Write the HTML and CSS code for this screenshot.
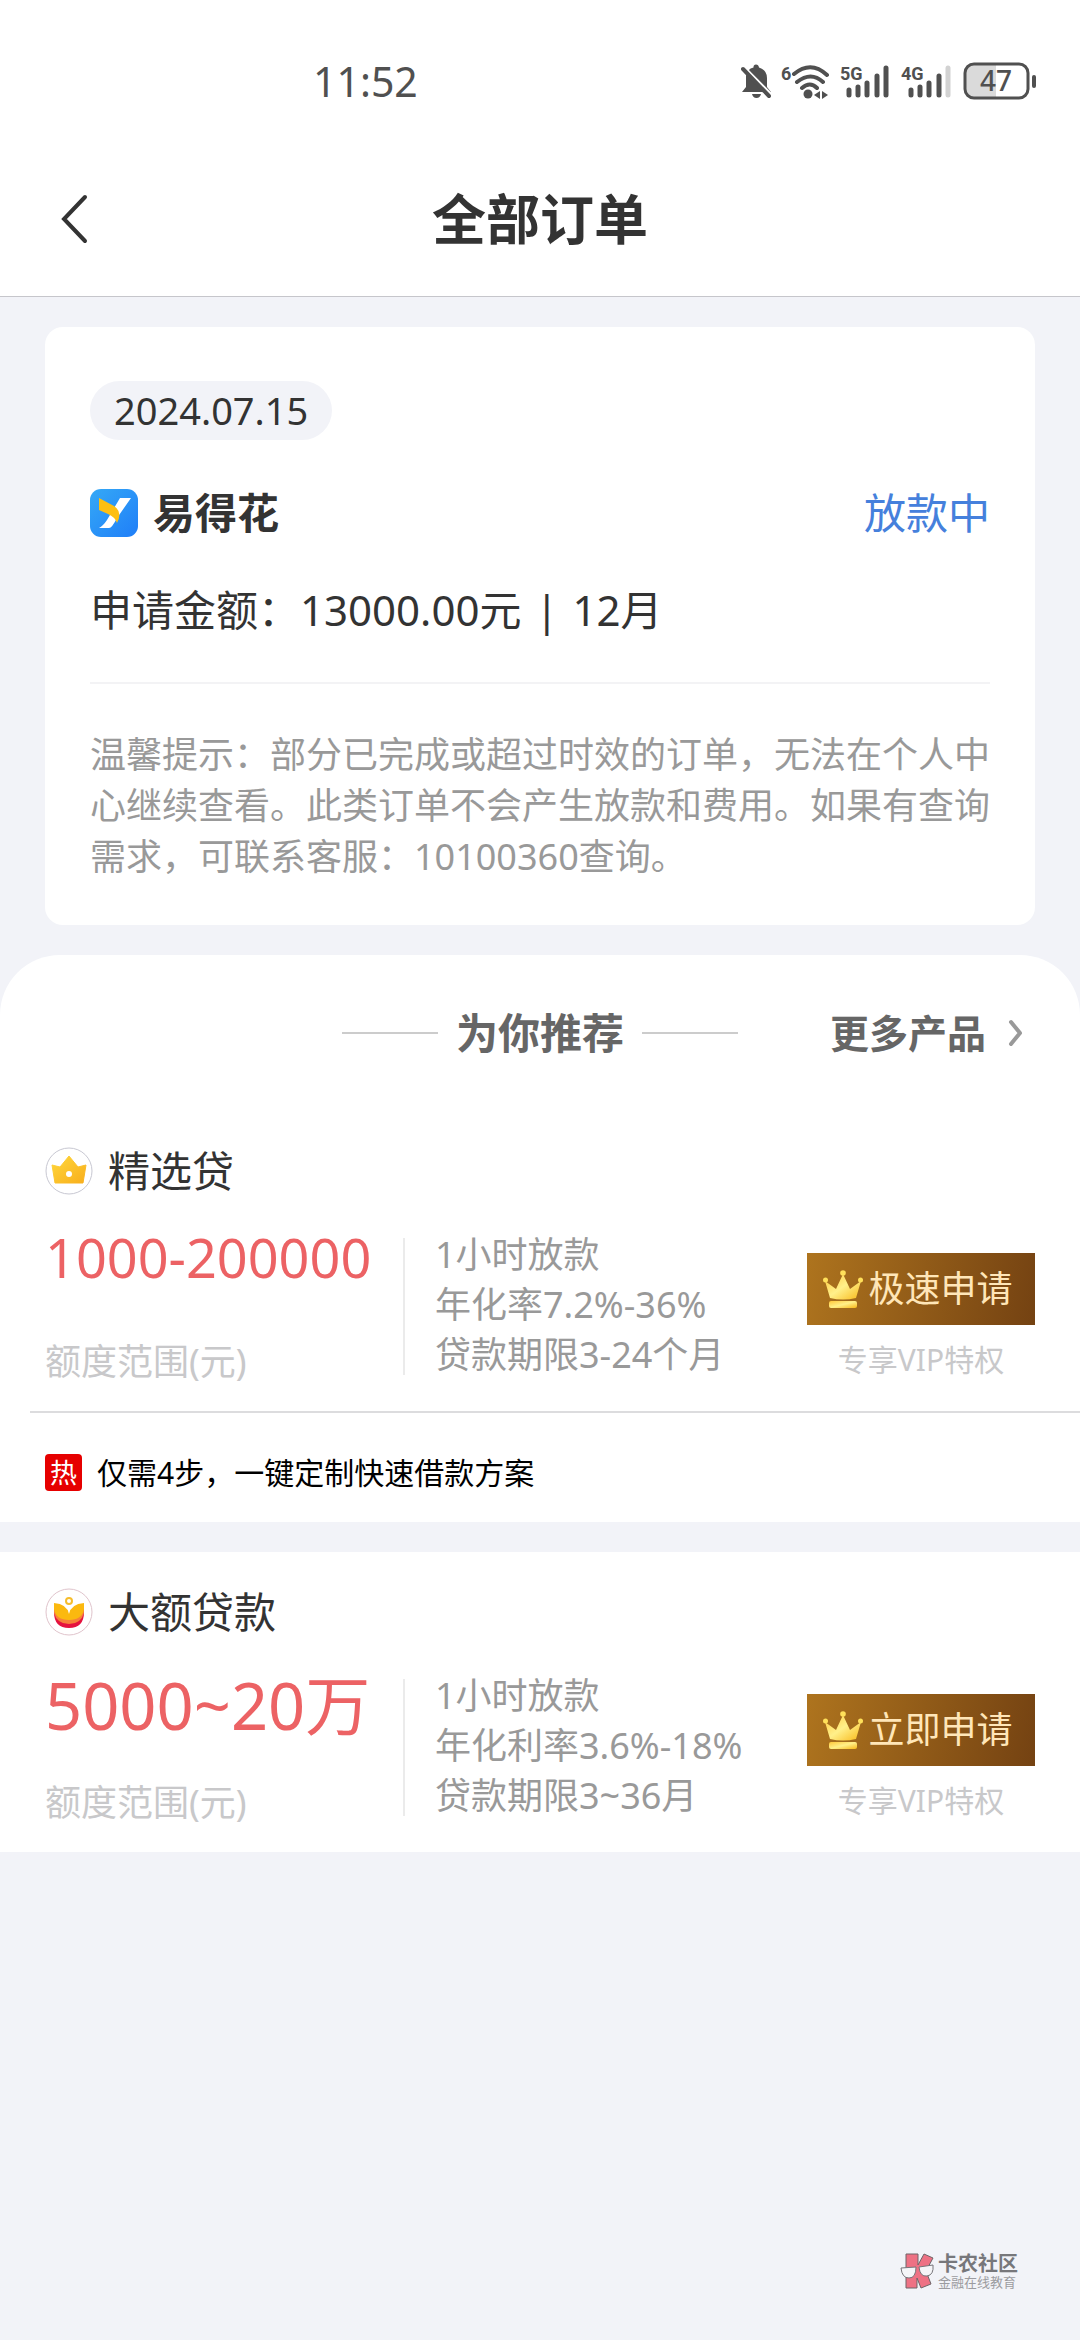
FILE: index.html
```html
<!DOCTYPE html>
<html lang="zh-CN">
<head>
<meta charset="utf-8">
<meta name="viewport" content="width=device-width, initial-scale=1">
<title>全部订单</title>
<link rel="stylesheet" href="styles.css">
</head>
<body>
<svg class="defs" aria-hidden="true">
  <defs>
    <linearGradient id="gold" x1="0" y1="0" x2="1" y2="1">
      <stop offset="0" stop-color="#ffc83a"/><stop offset="0.5" stop-color="#fff08a"/><stop offset="1" stop-color="#f8b818"/>
    </linearGradient>
    <linearGradient id="sun" x1="0" y1="0" x2="1" y2="1">
      <stop offset="0" stop-color="#ffd83c"/><stop offset="1" stop-color="#f8ae1c"/>
    </linearGradient>
    <linearGradient id="sky" x1="0" y1="0" x2="1" y2="1">
      <stop offset="0" stop-color="#35a9f6"/><stop offset="1" stop-color="#1f7ef8"/>
    </linearGradient>
    <symbol id="crown" viewBox="0 0 40 38">
      <path d="M7 28 2 11 13 19 20 4 27 19 38 11 33 28Q20 31 7 28Z" fill="url(#gold)"/>
      <circle cx="2.500" cy="10" r="2.500" fill="#ffe05a"/><circle cx="20" cy="3" r="2.800" fill="#ffe05a"/><circle cx="37.500" cy="10" r="2.500" fill="#ffe05a"/>
      <rect x="6" y="31" width="28" height="7" rx="2" fill="url(#gold)"/>
    </symbol>
  </defs>
</svg>
<div class="page">
  <header class="top">
    <div class="status">
      <time class="clock">11:52</time>
      <div class="status-icons">
        <svg width="30" height="36" viewBox="0 0 30 36">
          <path d="M5 13Q6 6 12.500 4.500V4Q12.500 1.500 15 1.500T18 4.500Q26 7 26 15V24L30 29H1L5 24Z" fill="#505050"/>
          <path d="M11 31H20Q19 35 15.500 35T11 31Z" fill="#505050"/>
          <path d="M1 3 31 33" stroke="#fff" stroke-width="4"/>
          <path d="M2 6 28 33" stroke="#505050" stroke-width="4" stroke-linecap="round"/>
        </svg>
        <svg width="49" height="36" viewBox="0 0 49 36" fill="none" stroke="#505050" stroke-width="4" stroke-linecap="round">
          <text class="net" x="0" y="17" fill="#505050" stroke="none">6</text>
          <path d="M13 11Q30 -3 46 12M16 19Q30 8 42 19M21 25Q29 18 36 25"/>
          <circle cx="27" cy="31" r="4.500" fill="#505050" stroke="none"/>
          <path d="M39 28V36L33 32ZM41 28V36L47 32Z" fill="#505050" stroke="none"/>
        </svg>
        <svg width="51" height="36" viewBox="0 0 51 36" fill="none" stroke="#505050" stroke-width="5" stroke-linecap="round">
          <text class="net" x="0" y="17" fill="#505050" stroke="none">5G</text>
          <path d="M9 27V32M18 24V32M27 20V32M37 13V32M46 5V32"/>
        </svg>
        <svg width="52" height="36" viewBox="0 0 52 36" fill="none" stroke="#505050" stroke-width="5" stroke-linecap="round">
          <text class="net" x="0" y="17" fill="#505050" stroke="none">4G</text>
          <path d="M10 27V32M19 24V32M28 20V32M38 13V32"/><path d="M47 5V32" stroke="#d2d2d2"/>
        </svg>
        <svg width="73" height="40" viewBox="0 0 73 40">
          <path d="M12 4H33V36H12Q3 36 3 28V12Q3 4 12 4Z" fill="#dadada"/>
          <rect x="2" y="3" width="63" height="34" rx="9" fill="none" stroke="#505050" stroke-width="3"/>
          <path d="M71 16V25" stroke="#505050" stroke-width="4" stroke-linecap="round"/>
          <text class="charge" x="33" y="30" text-anchor="middle" fill="#505050">47</text>
        </svg>
      </div>
    </div>
    <nav class="nav">
      <button class="back" type="button" aria-label="返回">
        <svg width="30" height="52" viewBox="0 0 30 52" fill="none" stroke="#333" stroke-width="4" stroke-linecap="round"><path d="M25 4 4 26 25 48"/></svg>
      </button>
      <h1 class="title">全部订单</h1>
    </nav>
  </header>

  <main>
    <section class="order">
      <time class="date">2024.07.15</time>
      <div class="order-head">
        <svg width="48" height="48" viewBox="0 0 48 48">
          <rect width="48" height="48" rx="11" fill="url(#sky)"/>
          <path d="M30 9H41L27 29Q22 39 19 39H9Q13 37 17 31Z" fill="#fff"/>
          <path d="M9 9 24 17Q33 23 27 34Q25 28 18 25L9 21Z" fill="#fdbf12"/>
        </svg>
        <h2 class="order-name">易得花</h2>
        <span class="order-state">放款中</span>
      </div>
      <p class="order-sum">申请金额：13000.00元 <span class="bar">|</span> 12月</p>
      <p class="tip">温馨提示：部分已完成或超过时效的订单，无法在个人中心继续查看。此类订单不会产生放款和费用。如果有查询需求，可联系客服：10100360查询。</p>
    </section>

    <section class="products">
      <div class="products-head">
        <h2 class="products-title">为你推荐</h2>
        <a class="more" href="#more">更多产品
          <svg width="16" height="28" viewBox="0 0 16 28" fill="none" stroke="#999" stroke-width="4" stroke-linecap="round" stroke-linejoin="round"><path d="M3 3 12 14 3 25"/></svg>
        </a>
      </div>

      <article class="product">
        <div class="product-head">
          <svg width="48" height="48" viewBox="0 0 48 48">
            <circle cx="24" cy="24" r="23" fill="#fff" stroke="#c8c8d2"/>
            <path d="M7 18 15 20 24 9 33 20 41 18 38 36H10Z" fill="url(#sun)" stroke="url(#sun)" stroke-linejoin="round"/>
            <circle cx="24" cy="27" r="3" fill="#fff"/>
          </svg>
          <h3 class="product-name">精选贷</h3>
        </div>
        <div class="product-body">
          <div class="quota">
            <strong class="amount">1000-200000</strong>
            <span class="quota-label">额度范围(元)</span>
          </div>
          <p class="terms">1小时放款<br>年化率7.2%-36%<br>贷款期限3-24个月</p>
          <div class="action">
            <button class="apply" type="button"><svg width="40" height="38"><use href="#crown"/></svg>极速申请</button>
            <span class="vip">专享VIP特权</span>
          </div>
        </div>
        <p class="hot"><span class="hot-badge">热</span>仅需4步，一键定制快速借款方案</p>
      </article>

      <article class="product">
        <div class="product-head">
          <svg width="48" height="48" viewBox="0 0 48 48">
            <circle cx="24" cy="24" r="23" fill="#fff" stroke="#e0c4cc"/>
            <path d="M9 24Q24 42 39 24Q39 40 24 40T9 24Z" fill="#e5123f"/>
            <path d="M9 20Q24 40 39 20V25Q36 36 24 36T9 25Z" fill="#f7803a"/>
            <path d="M9 15Q22 16 24 26Q26 16 39 15V21Q37 32 24 32T9 21Z" fill="#fbb90f"/>
            <circle cx="24" cy="13" r="3" fill="none" stroke="#f6bd2c" stroke-width="2"/>
          </svg>
          <h3 class="product-name">大额贷款</h3>
        </div>
        <div class="product-body">
          <div class="quota">
            <strong class="amount amount-large">5000~20万</strong>
            <span class="quota-label">额度范围(元)</span>
          </div>
          <p class="terms">1小时放款<br>年化利率3.6%-18%<br>贷款期限3~36月</p>
          <div class="action">
            <button class="apply" type="button"><svg width="40" height="38"><use href="#crown"/></svg>立即申请</button>
            <span class="vip">专享VIP特权</span>
          </div>
        </div>
      </article>
    </section>
  </main>

  <footer class="credit">
    <svg width="34" height="36" viewBox="0 0 34 36">
      <path d="M6 1H18V12L24 1 33 5 26 18 31 31 21 35 17 25V35H6Z" fill="#ee7184" stroke="#6e6468"/>
      <path d="M1 15 16 14Q16 25 9 25T1 15Z" fill="#f5f5f8" stroke="#77757a" stroke-width="1"/>
      <path d="M19 14 33 12Q34 22 27 23T19 14Z" fill="#f5f5f8" stroke="#77757a" stroke-width="1"/>
    </svg>
    <div>
      <strong class="credit-name">卡农社区</strong>
      <span class="credit-line">金融在线教育</span>
    </div>
  </footer>
</div>
</body>
</html>
```

FILE: styles.css
```css
* { box-sizing: border-box; }

body {
  margin: 0;
  background: #f2f3f8;
  color: #333;
  font-family: "Noto Sans", "Noto Sans CJK SC", sans-serif;
}

h1, h2, h3, p { margin: 0; }
button { margin: 0; padding: 0; border: 0; background: none; font: inherit; }
svg { display: block; flex: none; }

.defs { position: absolute; width: 0; height: 0; }

.page { display: flex; flex-direction: column; min-height: 100vh; }

.top { background: #fff; border-bottom: 1px solid #c6c6cb; }

.status {
  display: flex;
  align-items: center;
  justify-content: space-between;
  padding: 51px 44px 33px 313px;
}
.clock { font-size: 41px; line-height: 60px; color: #505050; }
.status-icons { display: flex; align-items: center; gap: 10px; }
.net { font: bold 18px Roboto, sans-serif; }
.charge { font: 500 28px "Noto Sans", sans-serif; }

.nav {
  display: grid;
  grid-template-columns: 1fr auto 1fr;
  align-items: center;
  padding: 45px 60px 47px;
}
.back { justify-self: start; }
.title { font-size: 54px; line-height: 60px; font-weight: 700; }

.order {
  margin: 30px 45px;
  padding: 54px 45px 43px;
  background: #fff;
  border-radius: 18px;
}
.date {
  display: block;
  width: fit-content;
  padding: 0 24px;
  border-radius: 30px;
  background: #f2f3f8;
  font-size: 38px;
  line-height: 59px;
}
.order-head { display: flex; align-items: center; gap: 15px; margin-top: 43px; line-height: 60px; }
.order-name { flex: 1; font-size: 42px; font-weight: 700; }
.order-state { font-size: 42px; color: #4580dc; }
.order-sum { margin-top: 37px; font-size: 42px; line-height: 60px; }
.bar { margin: 0 3px; }
.tip {
  margin-top: 42px;
  padding-top: 45px;
  border-top: 2px solid #f3f3f5;
  font-size: 36px;
  line-height: 51px;
  color: #999;
}

.products { border-radius: 60px 60px 0 0; }
.products-head {
  display: grid;
  grid-template-columns: 1fr auto 1fr;
  align-items: center;
  padding: 48px 56px 0;
  border-radius: 60px 60px 0 0;
  background: #fff;
  line-height: 60px;
  color: #666;
}
.products-title {
  grid-column: 2;
  display: flex;
  align-items: center;
  gap: 18px;
  font-size: 42px;
  font-weight: 700;
}
.products-title::before,
.products-title::after { content: ""; width: 96px; height: 2px; background: #ccc; }
.more {
  justify-self: end;
  display: flex;
  align-items: center;
  gap: 22px;
  font-size: 39px;
  font-weight: 700;
  color: #666;
  text-decoration: none;
}

.product { padding: 30px 45px 0; background: #fff; }
.product + .product { margin-top: 30px; }
.products-head + .product { padding-top: 78px; }
.product-head { display: flex; align-items: center; gap: 15px; }
.product-name { font-size: 42px; line-height: 60px; font-weight: 400; }

.product-body {
  display: grid;
  grid-template-columns: 358px 1fr 228px;
  padding: 21px 0 29px;
}
.quota { display: flex; flex-direction: column; justify-content: space-between; }
.amount { font-size: 54px; line-height: 70px; font-weight: 400; color: #ec6264; }
.amount-large { font-size: 65px; line-height: 84px; }
.quota-label { font-size: 36px; line-height: 40px; color: #c8c8ca; }
.terms {
  padding: 8px 0 2px 32px;
  background: linear-gradient(#ebebeb, #ebebeb) 0 16px / 2px 137px no-repeat;
  font-size: 36px;
  line-height: 50px;
  color: #999;
  white-space: nowrap;
}
.action { display: flex; flex-direction: column; align-items: center; padding-top: 31px; }
.apply {
  display: flex;
  align-items: center;
  justify-content: center;
  gap: 5px;
  width: 100%;
  height: 72px;
  padding-right: 6px;
  background: linear-gradient(100deg, #ae741e, #744212);
  font-size: 36px;
  line-height: 48px;
  color: #ffe6b8;
  white-space: nowrap;
}
.vip { margin-top: 15px; font-size: 30px; line-height: 40px; color: #c8c8ca; }

.hot {
  display: flex;
  align-items: center;
  gap: 15px;
  margin: 0 -45px 0 -15px;
  padding: 38px 15px 28px;
  border-top: 2px solid #dcdcde;
  font-size: 30px;
  line-height: 43px;
  color: #000;
}
.hot-badge {
  width: 37px;
  border-radius: 4px;
  background: #e60000;
  color: #fff;
  font-size: 27px;
  line-height: 37px;
  text-align: center;
}

.credit {
  display: flex;
  align-items: center;
  justify-content: flex-end;
  gap: 4px;
  margin-top: auto;
  padding: 40px 62px 51px;
}
.credit-name, .credit-line { display: block; }
.credit-name { font-size: 20px; line-height: 22px; color: #77777b; }
.credit-line { font-size: 13px; line-height: 14px; color: #9c9ca0; }
```
